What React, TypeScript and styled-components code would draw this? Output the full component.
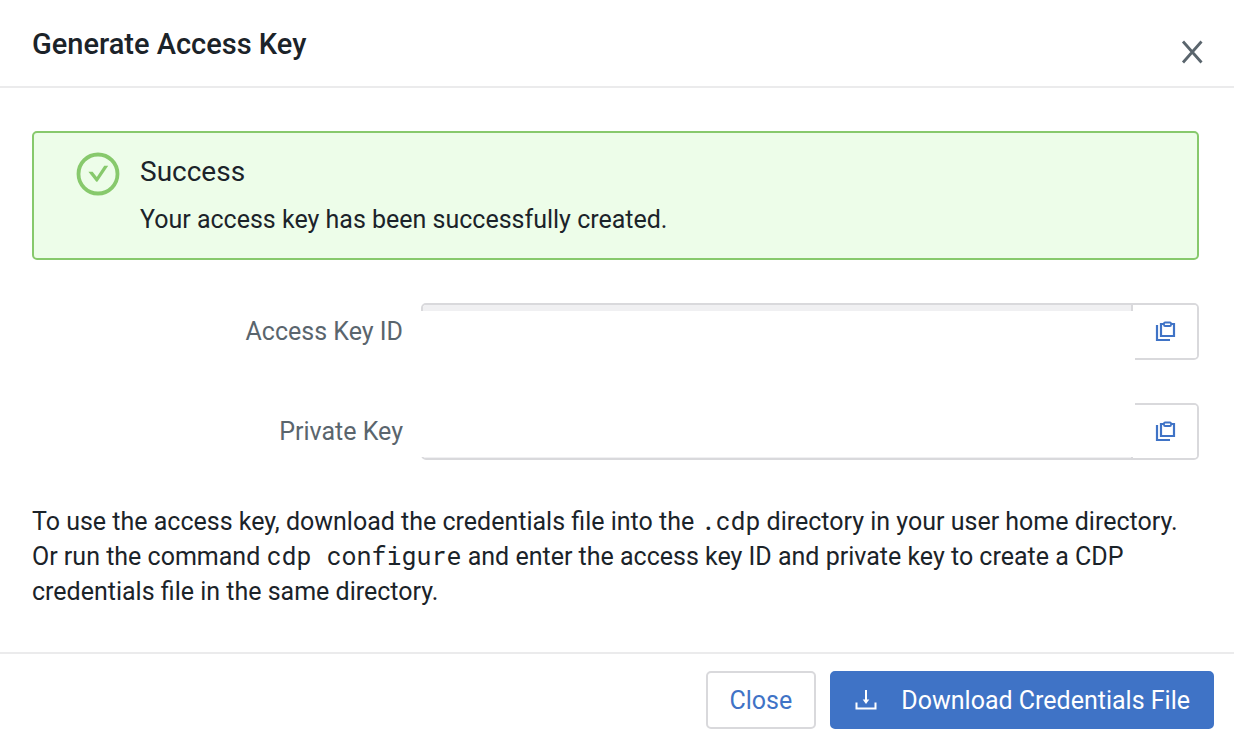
import React from 'react';
import styled, { createGlobalStyle, css } from 'styled-components';

const color = {
  text: '#1b2329',
  muted: '#5a656d',
  line: '#ebebec',
  border: '#d9d9dc',
  blue: '#3f73c6',
  green: '#87c96c',
  greenSoft: '#edfde9',
  disabled: '#f0f0f2',
};

const GlobalStyle = createGlobalStyle`
  *, *::before, *::after { box-sizing: border-box; }
  body {
    margin: 0;
    background: #fff;
    color: ${color.text};
    font-family: Roboto, sans-serif;
    font-size: 25px;
    line-height: 35px;
  }
`;

const Modal = styled.section`
  display: flex;
  flex-direction: column;
`;

const Header = styled.header`
  display: flex;
  justify-content: space-between;
  align-items: flex-start;
  padding: 24px 28px 20px 32px;
  border-bottom: 2px solid ${color.line};
`;

const Title = styled.h1`
  margin: 0;
  font-size: 29px;
  line-height: 40px;
  font-weight: 500;
`;

const IconButton = styled.button`
  display: flex;
  margin: 0;
  padding: 14px 0 0;
  border: 0;
  background: none;
  color: ${color.muted};
  cursor: pointer;
`;

const Body = styled.div`
  padding: 43px 35px 43px 32px;
`;

const Alert = styled.div`
  display: flex;
  gap: 20px;
  padding: 19px 42px 21px;
  border: 2px solid ${color.green};
  border-radius: 5px;
  background: ${color.greenSoft};

  svg { flex: none; color: ${color.green}; }
`;

const AlertTitle = styled.h2`
  margin: 0 0 10px;
  font-size: 28px;
  line-height: 40px;
  font-weight: 400;
`;

const Paragraph = styled.p`
  margin: 0;
`;

const Fields = styled.form`
  display: flex;
  flex-direction: column;
  gap: 43px;
  margin: 43px 0 44px;
  position: relative;
`;

const Field = styled.div`
  display: grid;
  grid-template-columns: 1fr 2fr;
  align-items: center;
`;

const Label = styled.label`
  padding-right: 18px;
  text-align: right;
  color: ${color.muted};
`;

const InputGroup = styled.div`
  display: flex;
  height: 57px;
  border: 2px solid ${color.border};
  border-radius: 5px;
  overflow: hidden;
`;

const KeyInput = styled.input`
  flex: 1;
  min-width: 0;
  padding: 0 16px;
  border: 0;
  background: ${color.disabled};
  color: ${color.muted};
  font: inherit;
`;

const CopyButton = styled.button`
  display: flex;
  align-items: center;
  justify-content: center;
  width: 66px;
  padding: 0;
  border: 0;
  border-left: 2px solid ${color.border};
  background: #fff;
  color: ${color.blue};
  cursor: pointer;
`;

const Redaction = styled.div`
  position: absolute;
  top: 8px;
  bottom: 3px;
  left: calc(100% / 3 - 2px);
  right: 64px;
  background: #fff;
`;

const Code = styled.code`
  font-family: 'Roboto Mono', 'DejaVu Sans Mono', monospace;
  font-size: 25px;
  line-height: 1;
`;

const Footer = styled.footer`
  display: flex;
  justify-content: flex-end;
  gap: 14px;
  padding: 17px 20px 27px;
  border-top: 2px solid ${color.line};
`;

const Button = styled.button<{ $primary?: boolean }>`
  display: flex;
  align-items: center;
  gap: 23px;
  height: 58px;
  padding: 0 22px;
  border: 2px solid ${color.border};
  border-radius: 5px;
  background: #fff;
  color: ${color.blue};
  font: inherit;
  cursor: pointer;

  ${({ $primary }) => $primary && css`
    border-color: ${color.blue};
    background: ${color.blue};
    color: #fff;
  `}
`;

const CloseIcon = () => (
  <svg width="28" height="28" viewBox="0 0 28 28" fill="none" stroke="currentColor" strokeWidth="2.8" aria-hidden="true">
    <path d="M5 3.5 23.5 24.500M23.500 3.500 5 24.500" />
  </svg>
);

const CheckIcon = () => (
  <svg width="44" height="44" viewBox="0 0 44 44" fill="none" stroke="currentColor" aria-hidden="true">
    <circle cx="22" cy="22" r="19.500" strokeWidth="3.800" />
    <path d="M12.400 19.800h4.200l4.200 5.200 7.400-11.200h4L21.700 29.200q-.9 1-1.800 0z" fill="currentColor" stroke="none" />
  </svg>
);

const CopyIcon = () => (
  <svg width="22" height="22" viewBox="0 0 22 22" fill="none" stroke="currentColor" strokeWidth="2.2" aria-hidden="true">
    <path d="M3 4V19H16" />
    <path d="M10 3H7V15H20V3H17" />
    <rect x="10" y="1.500" width="7" height="3.500" rx="1" strokeWidth="1.800" />
  </svg>
);

const DownloadIcon = () => (
  <svg width="24" height="24" viewBox="0 0 24 24" fill="none" stroke="currentColor" strokeWidth="2" aria-hidden="true">
    <path d="M2.500 14.500V20.500H21.500V14.500" />
    <path d="M12 2V13" />
    <path d="M8.700 11.500H15.300L12 16z" fill="currentColor" stroke="none" />
  </svg>
);

const keys = [
  { id: 'access-key-id', label: 'Access Key ID' },
  { id: 'private-key', label: 'Private Key' },
];

export default function App() {
  return (
    <>
      <GlobalStyle />
      <Modal role="dialog" aria-labelledby="dialog-title">
        <Header>
          <Title id="dialog-title">Generate Access Key</Title>
          <IconButton type="button" aria-label="Close dialog"><CloseIcon /></IconButton>
        </Header>
        <Body>
          <Alert role="status">
            <CheckIcon />
            <div>
              <AlertTitle>Success</AlertTitle>
              <Paragraph>Your access key has been successfully created.</Paragraph>
            </div>
          </Alert>
          <Fields>
            {keys.map(({ id, label }) => (
              <Field key={id}>
                <Label htmlFor={id}>{label}</Label>
                <InputGroup>
                  <KeyInput id={id} type="text" readOnly />
                  <CopyButton type="button" aria-label={`Copy ${label}`}><CopyIcon /></CopyButton>
                </InputGroup>
              </Field>
            ))}
            <Redaction />
          </Fields>
          <Paragraph>
            To use the access key, download the credentials file into the <Code>.cdp</Code> directory in your user home
            directory. Or run the command <Code>cdp configure</Code> and enter the access key ID and private key to
            create a CDP credentials file in the same directory.
          </Paragraph>
        </Body>
        <Footer>
          <Button type="button">Close</Button>
          <Button type="button" $primary><DownloadIcon />Download Credentials File</Button>
        </Footer>
      </Modal>
    </>
  );
}
